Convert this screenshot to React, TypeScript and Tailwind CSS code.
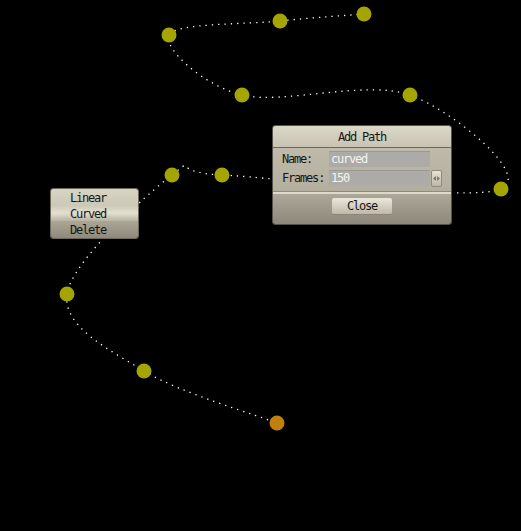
import React from 'react'

const pts: [number, number][] = [
  [364, 14], [280, 21], [169, 35], [242, 95], [410, 95], [501, 189],
  [222, 175], [172, 175], [67, 294], [144, 371], [277, 423],
]

// catmull-rom -> bezier
const buildPath = (p: [number, number][]) => {
  let d = `M${p[0][0]},${p[0][1]}`
  for (let i = 0; i < p.length - 1; i++) {
    const p0 = p[i - 1] || p[i]
    const p1 = p[i]
    const p2 = p[i + 1]
    const p3 = p[i + 2] || p2
    const c1x = p1[0] + (p2[0] - p0[0]) / 6
    const c1y = p1[1] + (p2[1] - p0[1]) / 6
    const c2x = p2[0] - (p3[0] - p1[0]) / 6
    const c2y = p2[1] - (p3[1] - p1[1]) / 6
    d += ` C${c1x},${c1y} ${c2x},${c2y} ${p2[0]},${p2[1]}`
  }
  return d
}

const font = "font-['DejaVu_Sans_Mono',monospace] text-[12px] tracking-[-1.2px]"

const App = () => {
  return (
    <div className={`relative w-[521px] h-[531px] bg-black overflow-hidden ${font}`}>
      <svg className="absolute inset-0" width={521} height={531}>
        <path d={buildPath(pts)} fill="none" stroke="#ffffff" strokeWidth={1.3} strokeDasharray="1.3 5" />
        {pts.map(([x, y], i) => (
          <circle key={i} cx={x} cy={y} r={7.5} fill={i === pts.length - 1 ? '#bf800c' : '#a4a402'} />
        ))}
      </svg>

      {/* popup menu */}
      <div className="absolute left-[50px] top-[188px] w-[89px] h-[51px] rounded-[3px] overflow-hidden border border-[#6c685c] flex flex-col text-[#161616]">
        <div className="h-[16px] pl-[19px] pt-px leading-[16px] bg-gradient-to-b from-[#d8d4c4] to-[#cdc9b9]">Linear</div>
        <div className="h-[16px] pl-[19px] pt-px leading-[16px] bg-gradient-to-b from-[#cbc7b7] via-[#e4e0d0] to-[#b7b2a2]">Curved</div>
        <div className="flex-1 pl-[19px] pt-px leading-[16px] bg-gradient-to-b from-[#aba696] to-[#8e897a]">Delete</div>
      </div>

      {/* add path dialog */}
      <div className="absolute left-[272px] top-[125px] w-[180px] h-[100px] rounded-[3px] overflow-hidden border border-[#55524a] flex flex-col text-[#161616]">
        <div className="h-[21px] pt-px flex items-center justify-center bg-gradient-to-b from-[#dcd8c8] to-[#c8c3b2]">Add Path</div>
        <div className="h-px bg-[#6b675b]" />
        <div className="h-[43px] pt-[3px] pl-[9px] flex flex-col gap-[3px] bg-gradient-to-b from-[#bfbaaa] to-[#b3ae9e]">
          <div className="flex items-center h-[16px]">
            <span className="w-[47px]">Name:</span>
            <div className="w-[101px] h-[16px] bg-[#acaba7] border-t border-[#9a9994] text-[#f4f4f2] pl-[2px] leading-[15px]">curved</div>
          </div>
          <div className="flex items-center h-[16px]">
            <span className="w-[47px]">Frames:</span>
            <div className="w-[101px] h-[16px] bg-[#acaba7] border-t border-[#9a9994] text-[#f4f4f2] pl-[2px] leading-[15px]">150</div>
            <div className="ml-[1px] w-[11px] h-[17px] rounded-[2px] bg-gradient-to-b from-[#e6e2d4] to-[#bdb8a8] border border-[#8d897c] flex items-center justify-center">
              <svg width="7" height="5" viewBox="0 0 7 5">
                <path d="M0 2.5 L3 0 V5 Z M7 2.5 L4 0 V5 Z" fill="#7c786c" />
              </svg>
            </div>
          </div>
        </div>
        <div className="h-px bg-[#8e8a7d]" />
        <div className="h-[2px] bg-[#dedacb]" />
        <div className="flex-1 flex justify-center pt-[4px] bg-gradient-to-b from-[#aca798] to-[#8d887a]">
          <div className="w-[60px] h-[17px] rounded-[2px] bg-gradient-to-b from-[#ebe7da] to-[#beb9a9] border-b border-[#8a8578] flex items-center justify-center">Close</div>
        </div>
      </div>
    </div>
  )
}

export default App
